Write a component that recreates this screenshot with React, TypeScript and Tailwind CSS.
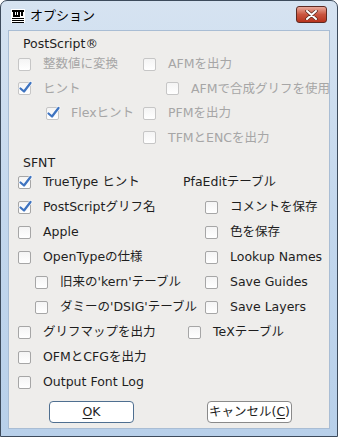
import React from "react";

const FONT = {
  fontFamily: '"DejaVu Sans", "Noto Sans CJK JP", sans-serif',
};

function Box({ checked, disabled }: { checked?: boolean; disabled?: boolean }) {
  return (
    <span className="relative inline-block w-[13px] h-[13px] shrink-0">
      <span
        className={
          "absolute inset-0 rounded-[2px] border bg-gradient-to-b from-[#f4f4f4] to-white " +
          (disabled ? "border-[#c6c6c6]" : "border-[#a6a6a6]")
        }
      />
      {checked && (
        <svg
          className="absolute left-[0px] top-[-2px]"
          width="15"
          height="15"
          viewBox="0 0 15 15"
        >
          <path
            d="M2.5 8.5 L6 11.5 L12.5 3"
            fill="none"
            stroke="#ffffff"
            strokeWidth="3.6"
            strokeLinecap="round"
            strokeLinejoin="round"
          />
          <path
            d="M2.5 8.5 L6 11.5 L12.5 3"
            fill="none"
            stroke="#3f74c0"
            strokeWidth="2.3"
            strokeLinecap="round"
            strokeLinejoin="round"
          />
        </svg>
      )}
    </span>
  );
}

function Check({
  label,
  checked,
  disabled,
  indent = 0,
}: {
  label: string;
  checked?: boolean;
  disabled?: boolean;
  indent?: number;
}) {
  return (
    <div
      className={"flex items-center gap-[12px] whitespace-nowrap " + (disabled ? "text-[#a6a6a6]" : "text-[#1e1e1e]")}
      style={{ paddingLeft: indent }}
    >
      <Box checked={checked} disabled={disabled} />
      <span>{label}</span>
    </div>
  );
}

function Row({ h, left, right, leftW }: any) {
  return (
    <div className="flex items-center" style={{ height: h }}>
      <div className="shrink-0" style={{ width: leftW }}>
        {left}
      </div>
      <div>{right}</div>
    </div>
  );
}

export default function App() {
  const ps = 24.5;
  const sf = 25;
  return (
    <div
      className="w-[338px] h-[437px] relative overflow-hidden text-[12.5px] leading-none"
      style={FONT}
    >
      <div className="absolute inset-0 rounded-t-[7px] border border-[#3d4b5c] bg-gradient-to-b from-[#d6e3f1] via-[#c3d7ed] to-[#b8d0ea] flex flex-col">
        {/* title bar */}
        <div className="h-[29px] shrink-0 flex items-center pl-[10px] pr-[9px]">
          <svg width="14" height="14" viewBox="0 0 14 14" className="shrink-0">
            <rect x="0" y="0" width="14" height="14" fill="#fff" />
            <rect x="1" y="1" width="12" height="2" fill="#000" />
            <rect x="2" y="3" width="2" height="5" fill="#000" />
            <rect x="5" y="3" width="1" height="3" fill="#000" />
            <rect x="7" y="3" width="2" height="5" fill="#000" />
            <rect x="10" y="3" width="2" height="4" fill="#000" />
            <rect x="4" y="6" width="3" height="2" fill="#000" />
            <rect x="1" y="9" width="12" height="1" fill="#000" />
            <rect x="1" y="11" width="12" height="1" fill="#000" />
            <rect x="1" y="13" width="12" height="1" fill="#000" />
          </svg>
          <span className="ml-[5px] text-[13px] text-black">オプション</span>
          <div className="ml-auto mr-[1px] w-[31px] h-[17px] mt-[-2px] rounded-[3px] border border-[#5e2a22] bg-gradient-to-b from-[#e9a99b] via-[#c9553f] to-[#b8331c] flex items-center justify-center">
            <svg width="13" height="10" viewBox="0 0 13 10">
              <path d="M2 1 L11 9 M11 1 L2 9" stroke="#5a2a20" strokeWidth="3.4" strokeLinecap="round" />
              <path d="M2 1 L11 9 M11 1 L2 9" stroke="#ffffff" strokeWidth="2" strokeLinecap="round" />
            </svg>
          </div>
        </div>
        {/* content */}
        <div className="mx-[7px] mb-[7px] flex-1 bg-[#eeedeb] border border-[#a9bdd4] pl-[9px] flex flex-col">
          <div className="mt-[5px] h-[16px] flex items-center pl-[5px] text-[#1e1e1e]">PostScript®</div>
          <Row
            h={ps}
            leftW={125}
            left={<Check label="整数値に変換" disabled />}
            right={<Check label="AFMを出力" disabled />}
          />
          <Row
            h={ps}
            leftW={125}
            left={<Check label="ヒント" checked disabled />}
            right={<Check label="AFMで合成グリフを使用" disabled indent={23} />}
          />
          <Row
            h={ps}
            leftW={125}
            left={<Check label="Flexヒント" checked disabled indent={28} />}
            right={<Check label="PFMを出力" disabled />}
          />
          <Row h={ps} leftW={125} left={null} right={<Check label="TFMとENCを出力" disabled />} />

          <div className="mt-[6px] h-[14px] flex items-center pl-[5px] text-[#1e1e1e]">SFNT</div>
          <Row
            h={sf}
            leftW={165}
            left={<Check label="TrueType ヒント" checked />}
            right={<span className="text-[#1e1e1e]">PfaEditテーブル</span>}
          />
          <Row
            h={sf}
            leftW={165}
            left={<Check label="PostScriptグリフ名" checked />}
            right={<Check label="コメントを保存" indent={22} />}
          />
          <Row h={sf} leftW={165} left={<Check label="Apple" />} right={<Check label="色を保存" indent={22} />} />
          <Row
            h={sf}
            leftW={165}
            left={<Check label="OpenTypeの仕様" />}
            right={<Check label="Lookup Names" indent={22} />}
          />
          <Row
            h={sf}
            leftW={165}
            left={<Check label="旧来の'kern'テーブル" indent={17} />}
            right={<Check label="Save Guides" indent={22} />}
          />
          <Row
            h={sf}
            leftW={165}
            left={<Check label="ダミーの'DSIG'テーブル" indent={17} />}
            right={<Check label="Save Layers" indent={22} />}
          />
          <Row
            h={sf}
            leftW={165}
            left={<Check label="グリフマップを出力" />}
            right={<Check label="TeXテーブル" indent={5} />}
          />
          <Row h={sf} leftW={165} left={<Check label="OFMとCFGを出力" />} right={null} />
          <Row h={sf} leftW={165} left={<Check label="Output Font Log" />} right={null} />

          <div className="flex mt-[6px]">
            <button
              className="ml-[31px] w-[85px] h-[22px] rounded-[4px] border border-[#4f6f90] bg-white text-[#1e1e1e] flex items-center justify-center"
              style={FONT}
            >
              <span className="underline underline-offset-2">O</span>K
            </button>
            <button
              className="ml-[73px] w-[85px] h-[22px] rounded-[4px] border border-[#8a8a8a] bg-white text-[#1e1e1e] flex items-center justify-center"
              style={FONT}
            >
              キャンセル(<span className="underline underline-offset-2">C</span>)
            </button>
          </div>
        </div>
      </div>
    </div>
  );
}
